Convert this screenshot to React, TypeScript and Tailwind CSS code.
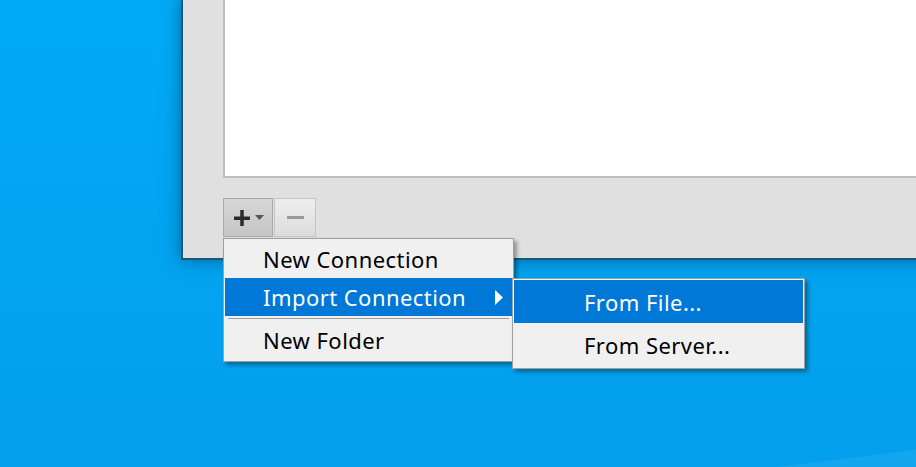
import { ReactNode } from 'react';

const FONT = { fontFamily: '"Segoe UI", "Noto Sans", "Open Sans", sans-serif' };

function MenuItem({ label, active, sub, pad, h }: { label: string; active?: boolean; sub?: boolean; pad: string; h: string }) {
  return (
    <div
      className={`flex items-center justify-between pr-[9px] ${pad} ${h} ${
        active ? 'bg-[#0078d7] text-white' : 'text-black'
      }`}
    >
      <span className="text-[22px] leading-none tracking-[0.45px]">{label}</span>
      {sub && (
        <svg width="8" height="15" viewBox="0 0 8 15">
          <path d="M0 0 L8 7.5 L0 15 Z" fill="#fff" />
        </svg>
      )}
    </div>
  );
}

function Menu({ className, children }: { className: string; children: ReactNode }) {
  return (
    <div
      className={`absolute bg-[#f0f0f0] border border-[#a0a0a0] py-[1px] px-[1px] shadow-[3px_3px_4px_rgba(0,0,0,0.35)] ${className}`}
    >
      {children}
    </div>
  );
}

export default function App() {
  return (
    <div
      style={FONT}
      className="relative w-[916px] h-[467px] overflow-hidden bg-gradient-to-b from-[#02aaf6] via-[#02a4f0] to-[#049fec]"
    >
      {/* light streak bottom-right */}
      <div className="absolute left-[700px] top-[458px] w-[300px] h-[40px] bg-[#2ab2f2] -rotate-[7deg] opacity-40" />

      {/* Window */}
      <div className="absolute left-[181px] top-0 w-[760px] h-[260px] bg-[#e0e0e0] border-l-2 border-b-2 border-[#1a5877] shadow-[0_0_16px_rgba(0,40,80,0.5)] flex flex-col">
        <div className="ml-[40px] h-[178px] bg-white border-l-2 border-b-2 border-[#bdbdbd]" />
        <div className="ml-[40px] mt-[20px] flex gap-[1px]">
          <div className="w-[50px] h-[39px] border border-[#a9a9a9] bg-gradient-to-b from-[#d6d6d6] to-[#c6c6c6] flex items-center justify-center gap-[5px] pl-[2px]">
            <svg width="16" height="16" viewBox="0 0 16 16">
              <rect x="0" y="6.5" width="16" height="3.5" fill="#2a2a2a" />
              <rect x="6.25" y="0" width="3.5" height="16" fill="#2a2a2a" />
            </svg>
            <svg width="9" height="5" viewBox="0 0 9 5">
              <path d="M0 0 L9 0 L4.5 5 Z" fill="#555" />
            </svg>
          </div>
          <div className="w-[42px] h-[39px] border border-[#c4c4c4] bg-gradient-to-b from-[#eeeeee] to-[#dcdcdc] flex items-center justify-center">
            <svg width="17" height="3" viewBox="0 0 17 3">
              <rect x="0" y="0" width="17" height="3" fill="#9a9a9a" />
            </svg>
          </div>
        </div>
      </div>

      {/* Context menu */}
      <Menu className="left-[223px] top-[238px] w-[291px]">
        <MenuItem label="New Connection" pad="pl-[38px]" h="h-[38px]" />
        <MenuItem label="Import Connection" active sub pad="pl-[38px]" h="h-[38px]" />
        <div className="h-[4px] flex items-center px-[3px]">
          <div className="w-full h-[1px] bg-[#a0a0a0]" />
        </div>
        <MenuItem label="New Folder" pad="pl-[38px]" h="h-[40px]" />
      </Menu>

      {/* Submenu */}
      <Menu className="left-[512px] top-[278px] w-[293px]">
        <MenuItem label="From File..." active pad="pl-[70px]" h="h-[43px]" />
        <MenuItem label="From Server..." pad="pl-[70px]" h="h-[44px]" />
      </Menu>
    </div>
  );
}
